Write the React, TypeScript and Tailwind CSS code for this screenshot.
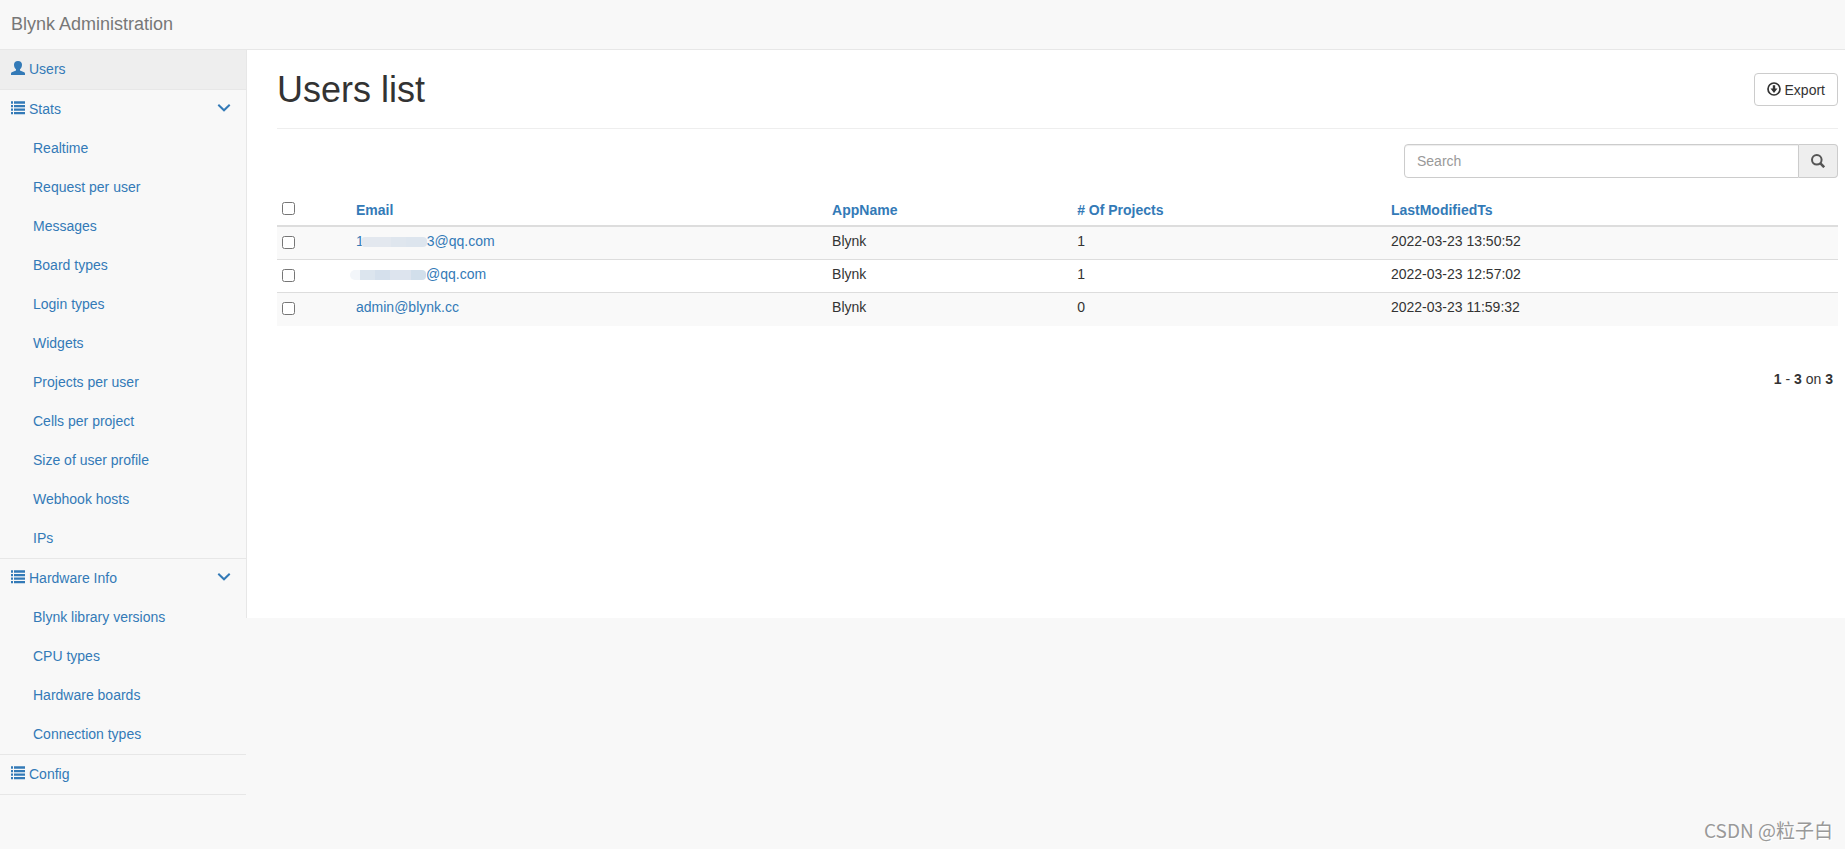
import type { ReactNode } from "react";

type MenuGroup = {
  label: string;
  icon: "user" | "list";
  active?: boolean;
  items?: string[];
};

const menu: MenuGroup[] = [
  { label: "Users", icon: "user", active: true },
  {
    label: "Stats",
    icon: "list",
    items: [
      "Realtime",
      "Request per user",
      "Messages",
      "Board types",
      "Login types",
      "Widgets",
      "Projects per user",
      "Cells per project",
      "Size of user profile",
      "Webhook hosts",
      "IPs",
    ],
  },
  {
    label: "Hardware Info",
    icon: "list",
    items: ["Blynk library versions", "CPU types", "Hardware boards", "Connection types"],
  },
  { label: "Config", icon: "list" },
];

const columns = ["Email", "AppName", "# Of Projects", "LastModifiedTs"];

const users: { id: string; email: ReactNode; app: string; projects: number; modified: string }[] = [
  {
    id: "user-1",
    email: (
      <>
        1
        <span className="-ml-[3px] inline-flex h-[10px] w-[66px] align-[-1px]">
          <span className="w-[30px] rounded-l bg-[#e3e8ef]" />
          <span className="w-[15px] bg-[#dfe6ee]" />
          <span className="w-[21px] rounded-r bg-[#dde5ee]" />
        </span>
        3@qq.com
      </>
    ),
    app: "Blynk",
    projects: 1,
    modified: "2022-03-23 13:50:52",
  },
  {
    id: "user-2",
    email: (
      <>
        <span className="-ml-[6px] inline-flex h-[10px] w-[76px] align-[-1px]">
          <span className="w-[10px] rounded-l-full bg-[#f3f6fa]" />
          <span className="w-[15px] bg-[#dce5ee]" />
          <span className="w-[15px] bg-[#d5e0ec]" />
          <span className="w-[21px] bg-[#dde4ee]" />
          <span className="w-[15px] rounded-r bg-[#d2dfeb]" />
        </span>
        @qq.com
      </>
    ),
    app: "Blynk",
    projects: 1,
    modified: "2022-03-23 12:57:02",
  },
  { id: "user-3", email: "admin@blynk.cc", app: "Blynk", projects: 0, modified: "2022-03-23 11:59:32" },
];

function UserIcon() {
  return (
    <svg viewBox="0 0 14 14" className="mt-[2px] size-[14px] shrink-0 fill-current" aria-hidden="true">
      <path d="M7 0C4.400 0 3 1.500 3 3.800C3 5.800 3.900 7.400 5 8.300V9.500L.8 11.300C.3 11.600 0 12 0 12.600V14H14V12.600C14 12 13.700 11.600 13.200 11.300L9 9.500V8.300C10.100 7.400 11 5.800 11 3.800C11 1.500 9.600 0 7 0Z" />
    </svg>
  );
}

function ListIcon() {
  return (
    <svg viewBox="0 0 14 14" className="mt-[2px] size-[14px] shrink-0 fill-current" aria-hidden="true">
      <path d="M0 .2h2v2.600H0zM3 .2h11v2.600H3zM0 4h2v2.300H0zM3 4h11v2.300H3zM0 7.500h2v2.300H0zM3 7.500h11v2.300H3zM0 11h2v2.200H0zM3 11h11v2.200H3z" />
    </svg>
  );
}

function ChevronIcon() {
  return (
    <svg viewBox="0 0 14 14" className="mt-[2px] size-[14px] fill-none stroke-current stroke-2" aria-hidden="true">
      <path d="M1.300 3.800L7 9.300L12.700 3.800" />
    </svg>
  );
}

function DownloadIcon() {
  return (
    <svg viewBox="0 0 14 14" className="mb-[2px] size-[14px]" aria-hidden="true">
      <circle cx="7" cy="7" r="6" fill="none" stroke="currentColor" strokeWidth="1.700" />
      <path d="M5.800 3.300h2.400v3.200h2.300L7 10.900L3.500 6.500h2.300z" fill="currentColor" />
    </svg>
  );
}

function SearchIcon() {
  return (
    <svg viewBox="0 0 14 14" className="size-[14px] fill-none stroke-current" aria-hidden="true">
      <circle cx="5.800" cy="5.800" r="4.800" strokeWidth="2" />
      <path d="M9.200 9.200L13.200 13.200" strokeWidth="2.600" />
    </svg>
  );
}

function Sidebar() {
  return (
    <nav className="w-[246px] shrink-0 text-[#337ab7]">
      <ul>
        {menu.map((group) => (
          <li key={group.label} className="border-b border-[#e7e7e7]">
            <a
              href="#"
              className={`flex items-start gap-1 pt-[9px] pr-[15px] pb-[10px] pl-[11px] ${group.active ? "bg-[#eeeeee]" : ""}`}
            >
              {group.icon === "user" ? <UserIcon /> : <ListIcon />}
              <span className="grow">{group.label}</span>
              {group.items && <ChevronIcon />}
            </a>
            {group.items && (
              <ul>
                {group.items.map((item) => (
                  <li key={item}>
                    <a href="#" className="block pt-[9px] pb-[10px] pl-[33px]">
                      {item}
                    </a>
                  </li>
                ))}
              </ul>
            )}
          </li>
        ))}
      </ul>
    </nav>
  );
}

function UsersTable() {
  return (
    <table className="mt-4 w-full table-fixed border-separate border-spacing-0 text-left">
      <colgroup>
        <col className="w-[74px]" />
        <col className="w-[30.5%]" />
        <col className="w-[15.7%]" />
        <col className="w-[20.1%]" />
        <col />
      </colgroup>
      <thead>
        <tr>
          <th className="border-b-2 border-[#dddddd] px-[5px] py-[6px] align-top">
            <input type="checkbox" aria-label="Select all" className="mt-[2px] block size-[13px]" />
          </th>
          {columns.map((column) => (
            <th key={column} className="border-b-2 border-[#dddddd] px-[5px] pt-[6px] pb-[5px] font-bold">
              <a href="#" className="text-[#337ab7]">
                {column}
              </a>
            </th>
          ))}
        </tr>
      </thead>
      <tbody className="[&>tr:not(:last-child)>td]:border-b [&>tr:not(:last-child)>td]:border-[#dddddd] [&>tr>td]:h-[33px] [&>tr>td]:px-[5px] [&>tr>td]:pt-1 [&>tr>td]:align-top">
        {users.map((user) => (
          <tr key={user.id} className="odd:bg-[#f9f9f9]">
            <td>
              <input type="checkbox" aria-label="Select user" className="mt-[5px] block size-[13px]" />
            </td>
            <td className="whitespace-nowrap">
              <a href="#" className="text-[#337ab7]">
                {user.email}
              </a>
            </td>
            <td>{user.app}</td>
            <td>{user.projects}</td>
            <td>{user.modified}</td>
          </tr>
        ))}
      </tbody>
    </table>
  );
}

export default function App() {
  return (
    <div className="relative min-h-screen bg-[#f8f8f8] font-['Liberation_Sans',Arial,sans-serif] text-sm leading-5 text-[#333333]">
      <header className="flex h-[50px] items-center border-b border-[#e7e7e7] pb-[2px] pl-[11px]">
        <a href="#" className="text-lg leading-5 text-[#777777]">
          Blynk Administration
        </a>
      </header>

      <div className="flex items-start">
        <Sidebar />

        <main className="min-h-[568px] grow border-l border-[#e7e7e7] bg-white pr-[7px] pl-[30px]">
          <div className="flex items-center justify-between border-b border-[#eeeeee] pt-[23px] pb-[22px]">
            <h1 className="text-4xl leading-[33px]">Users list</h1>
            <button
              type="button"
              className="flex h-[33px] items-center gap-1 rounded border border-[#cccccc] bg-white px-3"
            >
              <DownloadIcon />
              Export
            </button>
          </div>

          <form className="mt-[15px] ml-auto flex h-[34px] w-[434px]">
            <input
              type="text"
              placeholder="Search"
              aria-label="Search"
              className="min-w-0 grow rounded-l border border-[#cccccc] bg-white px-3 shadow-[inset_0_1px_1px_rgba(0,0,0,0.075)] placeholder:text-[#999999]"
            />
            <button
              type="button"
              aria-label="Submit search"
              className="flex w-[39px] items-center justify-center rounded-r border border-l-0 border-[#cccccc] bg-[#eeeeee] text-[#555555]"
            >
              <SearchIcon />
            </button>
          </form>

          <UsersTable />

          <p className="mt-[43px] pr-[5px] text-right">
            <b>1</b> - <b>3</b> on <b>3</b>
          </p>
        </main>
      </div>

      <div className="absolute right-3 bottom-[7px] font-['Noto_Sans_CJK_SC',sans-serif] text-[19px] leading-6 text-[#999999] [text-shadow:1px_1px_0_#ffffff]">
        CSDN @粒子白
      </div>
    </div>
  );
}
